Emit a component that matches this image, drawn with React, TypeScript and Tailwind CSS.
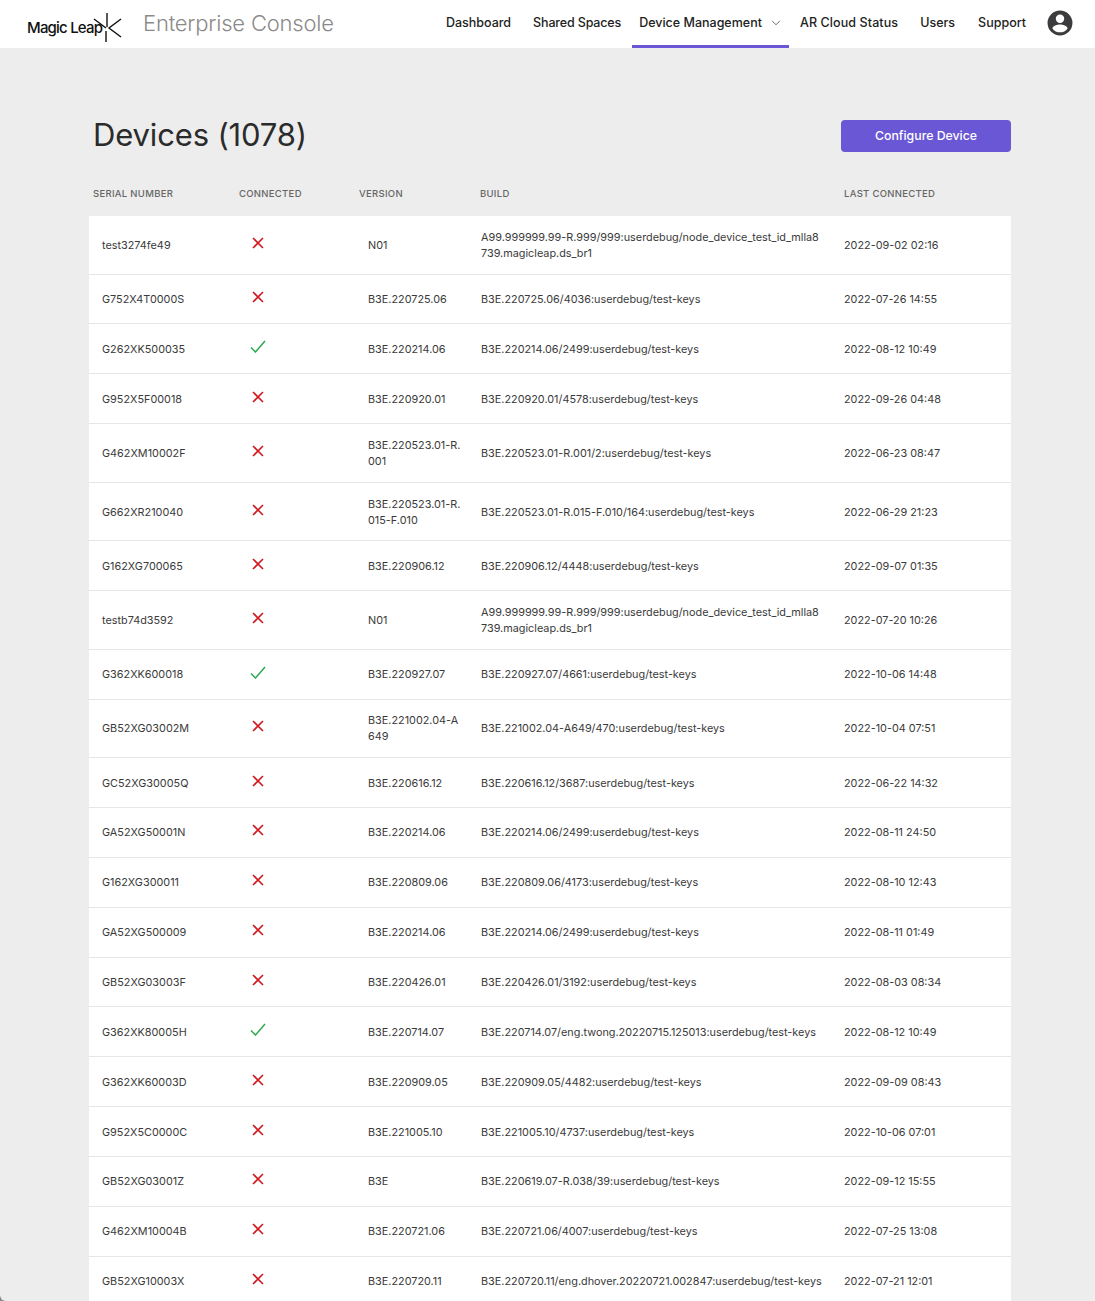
import { ChevronDown } from "lucide-react"

type Device = {
  serial: string
  connected: boolean
  version: string
  build: string
  last: string
}

const devices: Device[] = [
  { serial: "test3274fe49", connected: false, version: "N01", build: "A99.999999.99-R.999/999:userdebug/node_device_test_id_mlla8\n739.magicleap.ds_br1", last: "2022-09-02 02:16" },
  { serial: "G752X4T0000S", connected: false, version: "B3E.220725.06", build: "B3E.220725.06/4036:userdebug/test-keys", last: "2022-07-26 14:55" },
  { serial: "G262XK500035", connected: true, version: "B3E.220214.06", build: "B3E.220214.06/2499:userdebug/test-keys", last: "2022-08-12 10:49" },
  { serial: "G952X5F00018", connected: false, version: "B3E.220920.01", build: "B3E.220920.01/4578:userdebug/test-keys", last: "2022-09-26 04:48" },
  { serial: "G462XM10002F", connected: false, version: "B3E.220523.01-R.\n001", build: "B3E.220523.01-R.001/2:userdebug/test-keys", last: "2022-06-23 08:47" },
  { serial: "G662XR210040", connected: false, version: "B3E.220523.01-R.\n015-F.010", build: "B3E.220523.01-R.015-F.010/164:userdebug/test-keys", last: "2022-06-29 21:23" },
  { serial: "G162XG700065", connected: false, version: "B3E.220906.12", build: "B3E.220906.12/4448:userdebug/test-keys", last: "2022-09-07 01:35" },
  { serial: "testb74d3592", connected: false, version: "N01", build: "A99.999999.99-R.999/999:userdebug/node_device_test_id_mlla8\n739.magicleap.ds_br1", last: "2022-07-20 10:26" },
  { serial: "G362XK600018", connected: true, version: "B3E.220927.07", build: "B3E.220927.07/4661:userdebug/test-keys", last: "2022-10-06 14:48" },
  { serial: "GB52XG03002M", connected: false, version: "B3E.221002.04-A\n649", build: "B3E.221002.04-A649/470:userdebug/test-keys", last: "2022-10-04 07:51" },
  { serial: "GC52XG30005Q", connected: false, version: "B3E.220616.12", build: "B3E.220616.12/3687:userdebug/test-keys", last: "2022-06-22 14:32" },
  { serial: "GA52XG50001N", connected: false, version: "B3E.220214.06", build: "B3E.220214.06/2499:userdebug/test-keys", last: "2022-08-11 24:50" },
  { serial: "G162XG300011", connected: false, version: "B3E.220809.06", build: "B3E.220809.06/4173:userdebug/test-keys", last: "2022-08-10 12:43" },
  { serial: "GA52XG500009", connected: false, version: "B3E.220214.06", build: "B3E.220214.06/2499:userdebug/test-keys", last: "2022-08-11 01:49" },
  { serial: "GB52XG03003F", connected: false, version: "B3E.220426.01", build: "B3E.220426.01/3192:userdebug/test-keys", last: "2022-08-03 08:34" },
  { serial: "G362XK80005H", connected: true, version: "B3E.220714.07", build: "B3E.220714.07/eng.twong.20220715.125013:userdebug/test-keys", last: "2022-08-12 10:49" },
  { serial: "G362XK60003D", connected: false, version: "B3E.220909.05", build: "B3E.220909.05/4482:userdebug/test-keys", last: "2022-09-09 08:43" },
  { serial: "G952X5C0000C", connected: false, version: "B3E.221005.10", build: "B3E.221005.10/4737:userdebug/test-keys", last: "2022-10-06 07:01" },
  { serial: "GB52XG03001Z", connected: false, version: "B3E", build: "B3E.220619.07-R.038/39:userdebug/test-keys", last: "2022-09-12 15:55" },
  { serial: "G462XM10004B", connected: false, version: "B3E.220721.06", build: "B3E.220721.06/4007:userdebug/test-keys", last: "2022-07-25 13:08" },
  { serial: "GB52XG10003X", connected: false, version: "B3E.220720.11", build: "B3E.220720.11/eng.dhover.20220721.002847:userdebug/test-keys", last: "2022-07-21 12:01" },
]

function Logo() {
  return (
    <div className="flex shrink-0 items-start">
      <span className="mt-[13px] w-[66px] whitespace-nowrap text-[15px] leading-5 font-medium tracking-[-0.8px] text-[#111]">Magic Leap</span>
      <svg width="29" height="32" viewBox="0 0 29 32" className="mt-[6px] shrink-0" fill="none" stroke="#111" strokeWidth="1.4">
        <path d="M1 8 L13 17 M14 2 V16 M28 8 L16 17 L28 26 M13 20 V31" />
      </svg>
    </div>
  )
}

function CrossIcon() {
  return (
    <svg width="14" height="14" viewBox="0 0 14 14" fill="none" stroke="#d0181f" strokeWidth="1.6">
      <path d="M2 2 L12 12 M12 2 L2 12" />
    </svg>
  )
}

function CheckIcon() {
  return (
    <svg width="16" height="13" viewBox="0 0 16 13" className="ml-[-1px]" fill="none" stroke="#2fa84f" strokeWidth="1.5">
      <path d="M1 7.5 L5.5 12 L15 1" />
    </svg>
  )
}

function UserIcon() {
  return (
    <svg width="26" height="26" viewBox="0 0 24 24" fill="#3c3c3e">
      <path d="M12 0.5A11.5 11.5 0 1 0 12 23.5A11.5 11.5 0 1 0 12 0.5ZM12 4.2a3.9 3.9 0 1 1 0 7.8a3.9 3.9 0 0 1 0-7.8ZM12 20.6a8.7 8.7 0 0 1-7-3.6c.1-2.4 4.7-3.6 7-3.6s6.9 1.2 7 3.6a8.7 8.7 0 0 1-7 3.6Z" />
    </svg>
  )
}

export default function App() {
  return (
    <div className="bg-[#8a8a8a]">
      <div className="h-[1301px] overflow-hidden rounded-bl-md bg-[#ededed] font-['Inter',sans-serif] text-[#333]">
        <header className="flex h-12 items-center bg-white pl-[27px] pr-[22px]">
          <Logo />
          <span className="ml-[21px] mb-[2px] whitespace-nowrap text-[22px] font-light tracking-[-0.2px] text-[#8a8a8a]">Enterprise Console</span>
          <nav className="ml-auto flex h-full items-center gap-[22px] text-[12.5px] font-medium text-[#222]">
            <a className="mb-[2px]">Dashboard</a>
            <a className="mb-[2px] tracking-[-0.15px]">Shared Spaces</a>
            <a className="ml-[-11px] flex h-full items-center gap-[7px] border-b-[3px] border-[#6a57d5] pl-[7px] pr-[6px] pt-[1px]">
              Device Management
              <ChevronDown className="size-[14px] text-[#555]" strokeWidth={1.5} />
            </a>
            <a className="ml-[-11px] mb-[2px] tracking-[0.1px]">AR Cloud Status</a>
            <a className="mb-[2px]">Users</a>
            <a className="ml-px mb-[2px]">Support</a>
            <span className="ml-[-1px] mb-[2px]"><UserIcon /></span>
          </nav>
        </header>

        <main className="mt-[72px] mr-[84px] ml-[89px]">
          <div className="flex items-center justify-between">
            <h1 className="ml-1 mt-[-2px] text-[31px] leading-[30px] tracking-[-0.15px] text-[#2b2b2b]">Devices (1078)</h1>
            <button className="h-8 w-[170px] rounded-sm bg-[#6a57d5] pt-px text-[12.3px] font-medium text-white">Configure Device</button>
          </div>

          <div className="mt-[27px] grid h-[37px] grid-cols-[146px_120px_121px_364px_1fr] pl-1 text-[9.5px] font-medium uppercase leading-[30px] tracking-[0.3px] text-[#666]">
            <div>Serial Number</div>
            <div>Connected</div>
            <div>Version</div>
            <div>Build</div>
            <div>Last Connected</div>
          </div>

          <div className="bg-white text-[10.85px] leading-4 text-[#3a3a3a]">
            {devices.map((d) => (
              <div
                key={d.serial}
                className="grid min-h-[49.85px] grid-cols-[137px_129px_113px_363px_1fr] items-center border-b border-[#e6e6e6] py-[12.8px] pl-[13px]"
              >
                <div>{d.serial}</div>
                <div className="mb-1 pl-3">{d.connected ? <CheckIcon /> : <CrossIcon />}</div>
                <div className="whitespace-pre-line">{d.version}</div>
                <div className="whitespace-pre-line">{d.build}</div>
                <div>{d.last}</div>
              </div>
            ))}
          </div>
        </main>
      </div>
    </div>
  )
}
